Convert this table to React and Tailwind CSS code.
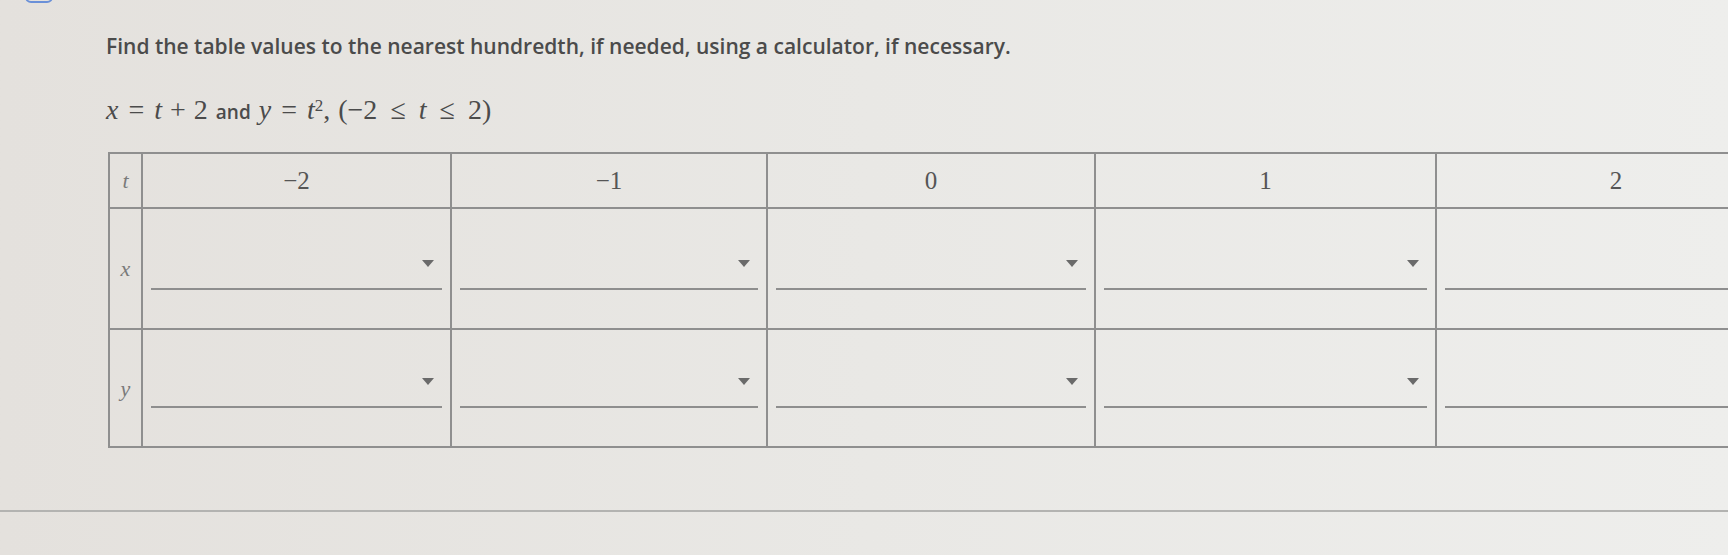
import React from 'react';

const cols = ['−2', '−1', '0', '1', '2'];
const widths = ['w-[309px]', 'w-[316px]', 'w-[328px]', 'w-[341px]', 'w-[360px]'];

const Select = () => (
  <div className="flex h-[48px] items-center justify-end border-b-2 border-[#8e8e8e] pr-[8px]">
    <svg width="12" height="8" viewBox="0 0 12 8" className="mb-[2px]">
      <path d="M0 0 L12 0 L6 7 Z" fill="#6a6a6a" />
    </svg>
  </div>
);

const App = () => {
  return (
    <div className="relative h-[555px] w-full overflow-hidden bg-linear-to-r from-[#e4e1dd] via-[#e9e8e5] to-[#eeeeec] text-[#4a4a4a]">
      {/* bit of a blue control cut off at the top */}
      <div className="absolute left-[25px] top-[-11px] h-[14px] w-[28px] rounded-md border-2 border-[#6a90d8]" />

      <div className="pl-[106px] pt-[32px]">
        <p className="whitespace-nowrap font-['Open_Sans',sans-serif] text-[21px] font-semibold leading-[28px] text-[#4b4b4b]">
          Find the table values to the nearest hundredth, if needed, using a calculator, if necessary.
        </p>

        <p className="mt-[35px] flex items-baseline whitespace-nowrap font-['Liberation_Serif',serif] text-[28px] leading-[30px] text-[#4b4b4b]">
          <i>x</i>
          <span className="mx-[10px]">=</span>
          <i>t</i>
          <span className="mx-[8px]">+</span>
          <span>2</span>
          <span className="mx-[8px] font-['Open_Sans',sans-serif] text-[19px] font-semibold">and</span>
          <i>y</i>
          <span className="mx-[10px]">=</span>
          <i>t</i>
          <sup className="text-[17px]">2</sup>
          <span className="mr-[8px]">,</span>
          <span>(−2</span>
          <span className="mx-[13px]">≤</span>
          <i>t</i>
          <span className="mx-[13px]">≤</span>
          <span>2)</span>
        </p>

        <table className="mt-[25px] ml-[2px] w-[1687px] max-w-none table-fixed border-collapse">
          <tbody>
            <tr className="h-[55px]">
              <td className="w-[33px] border-2 border-[#8f8f8f] text-center font-['Liberation_Serif',serif] text-[22px] italic text-[#7a7a7a]">
                t
              </td>
              {cols.map((c, i) => (
                <td
                  key={c}
                  className={`${widths[i]} border-2 border-[#8f8f8f] text-center font-['Liberation_Serif',serif] text-[25px] text-[#555]`}
                >
                  {c}
                </td>
              ))}
            </tr>
            <tr className="h-[119px]">
              <td className="border-2 border-[#8f8f8f] text-center font-['Liberation_Serif',serif] text-[22px] italic text-[#7a7a7a]">
                x
              </td>
              {cols.map((c) => (
                <td key={c} className="border-2 border-[#8f8f8f] px-[8px] pt-[33px] pb-[38px] align-top">
                  <Select />
                </td>
              ))}
            </tr>
            <tr className="h-[116px]">
              <td className="border-2 border-[#8f8f8f] text-center font-['Liberation_Serif',serif] text-[22px] italic text-[#7a7a7a]">
                y
              </td>
              {cols.map((c) => (
                <td key={c} className="border-2 border-[#8f8f8f] px-[8px] pt-[30px] pb-[38px] align-top">
                  <Select />
                </td>
              ))}
            </tr>
          </tbody>
        </table>
      </div>

      <div className="mt-[62px] border-t-2 border-[#b3b3b1]" />
    </div>
  );
};

export default App;
